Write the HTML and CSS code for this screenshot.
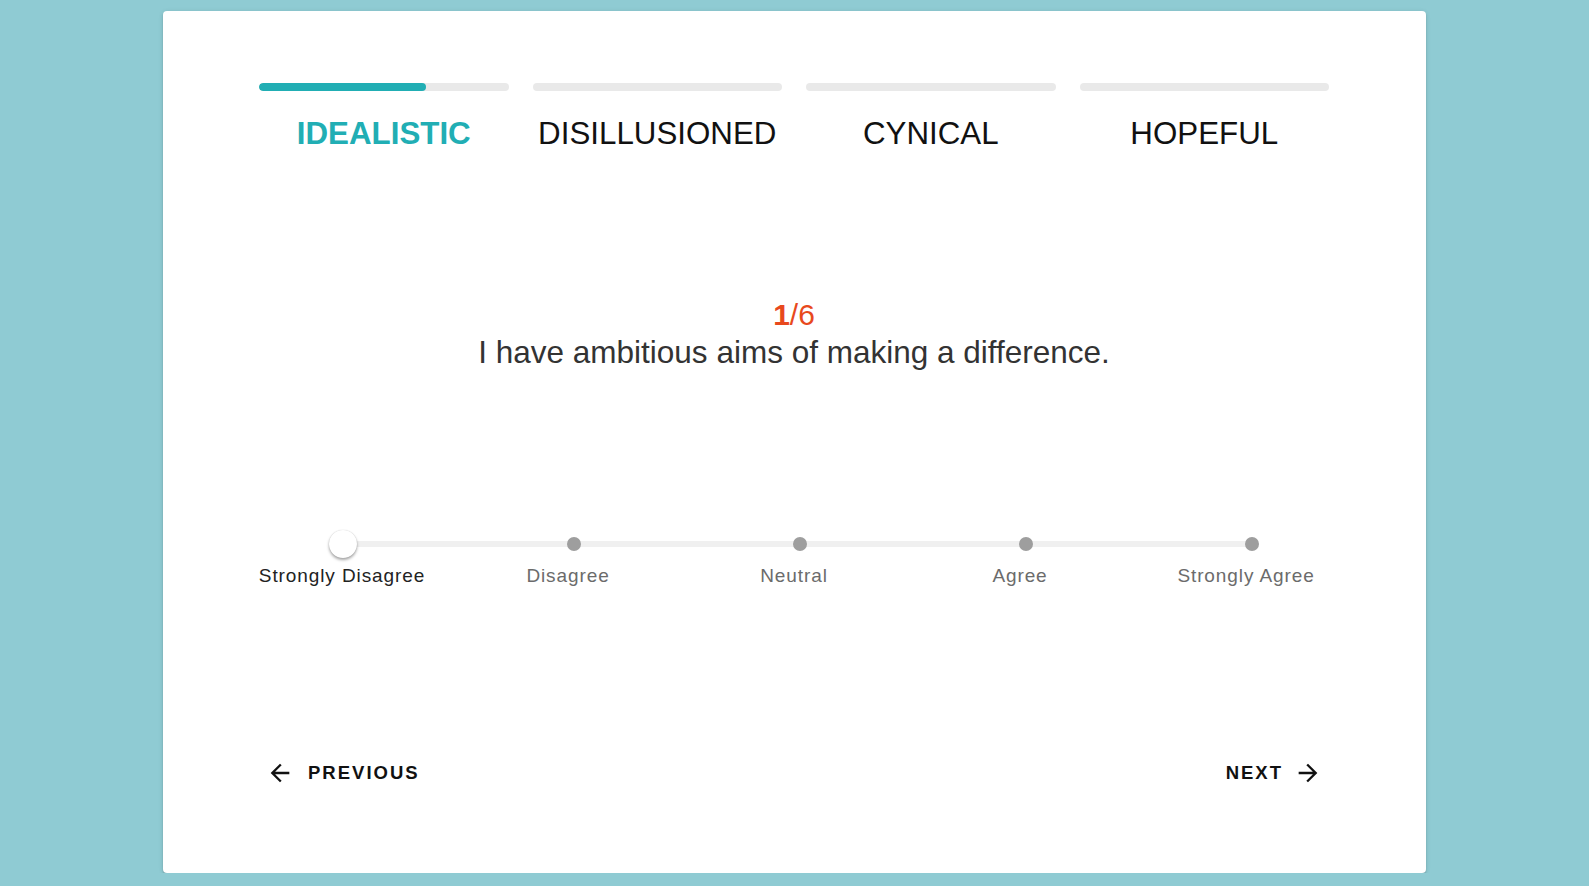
FILE: index.html
```html
<!DOCTYPE html>
<html lang="en">
<head>
<meta charset="utf-8">
<title>Quiz</title>
<link rel="stylesheet" href="styles.css">
</head>
<body>
<main class="card">
  <div class="steps">
    <div class="step">
      <div class="bar"><div class="fill" style="width:66.8%"></div></div>
      <div class="step-label active">IDEALISTIC</div>
    </div>
    <div class="step">
      <div class="bar"></div>
      <div class="step-label">DISILLUSIONED</div>
    </div>
    <div class="step">
      <div class="bar"></div>
      <div class="step-label">CYNICAL</div>
    </div>
    <div class="step">
      <div class="bar"></div>
      <div class="step-label">HOPEFUL</div>
    </div>
  </div>

  <div class="question">
    <div class="count"><b>1</b>/6</div>
    <div class="text">I have ambitious aims of making a difference.</div>
  </div>

  <div class="scale">
    <div class="track"></div>
    <div class="point">
      <div class="mark-row"><span class="thumb"></span></div>
      <div class="mark-label selected">Strongly Disagree</div>
    </div>
    <div class="point">
      <div class="mark-row"><span class="dot"></span></div>
      <div class="mark-label">Disagree</div>
    </div>
    <div class="point">
      <div class="mark-row"><span class="dot"></span></div>
      <div class="mark-label">Neutral</div>
    </div>
    <div class="point">
      <div class="mark-row"><span class="dot"></span></div>
      <div class="mark-label">Agree</div>
    </div>
    <div class="point">
      <div class="mark-row"><span class="dot"></span></div>
      <div class="mark-label">Strongly Agree</div>
    </div>
  </div>

  <div class="nav">
    <button class="btn btn-prev" type="button">
      <svg class="icon" viewBox="0 0 24 24" width="28" height="28" aria-hidden="true"><path d="M20 11H7.83l5.59-5.59L12 4l-8 8 8 8 1.41-1.41L7.83 13H20v-2z"/></svg>
      <span>PREVIOUS</span>
    </button>
    <button class="btn btn-next" type="button">
      <span>NEXT</span>
      <svg class="icon" viewBox="0 0 24 24" width="28" height="28" aria-hidden="true"><path d="M12 4l-1.41 1.41L16.17 11H4v2h12.17l-5.58 5.59L12 20l8-8z"/></svg>
    </button>
  </div>
</main>
</body>
</html>
```
FILE: styles.css
```css
* { box-sizing: border-box; }

html, body {
  margin: 0;
  padding: 0;
  background: #8fcbd3;
  font-family: "Liberation Sans", Arial, sans-serif;
}

body {
  padding-top: 11px;
}

.card {
  width: 1263px;
  height: 862px;
  margin: 0 auto;
  background: #ffffff;
  border-radius: 4px;
  box-shadow: 0 3px 1px -2px rgba(0,0,0,0.2), 0 2px 2px 0 rgba(0,0,0,0.14), 0 1px 5px 0 rgba(0,0,0,0.12);
  padding: 72px 97px 0 96px;
  display: flex;
  flex-direction: column;
}

/* steps */
.steps {
  display: grid;
  grid-template-columns: repeat(4, 1fr);
  column-gap: 24px;
}

.bar {
  height: 8px;
  border-radius: 4px;
  background: #e9e9e9;
  overflow: hidden;
}

.fill {
  height: 100%;
  border-radius: 4px;
  background: #21aeb4;
}

.step-label {
  margin-top: 25px;
  text-align: center;
  font-size: 31.3px;
  line-height: 36px;
  color: #111111;
}

.step-label.active {
  color: #21aeb4;
  font-weight: 700;
}

/* question */
.question {
  margin-top: 146px;
  text-align: center;
}

.count {
  font-size: 30px;
  line-height: 34px;
  color: #e8491d;
}

.count b { font-weight: 700; }

.text {
  margin-top: 2px;
  font-size: 31.5px;
  line-height: 36px;
  color: #333333;
}

/* slider scale */
.scale {
  position: relative;
  margin: 160px -30px 0;
  display: grid;
  grid-template-columns: repeat(5, 1fr);
}

.track {
  position: absolute;
  left: 113px;
  right: 107px;
  top: 11px;
  height: 6px;
  background: #f0f0f0;
  border-radius: 3px;
}

.point {
  display: flex;
  flex-direction: column;
  align-items: center;
  position: relative;
}

.mark-row {
  height: 28px;
  display: flex;
  align-items: center;
  justify-content: center;
}

.dot {
  width: 14px;
  height: 14px;
  border-radius: 50%;
  background: #9e9e9e;
  margin-left: 12px;
}

.thumb {
  width: 28px;
  height: 28px;
  border-radius: 50%;
  background: #ffffff;
  margin-left: 2px;
  box-shadow: 0 2px 3px rgba(0,0,0,0.35), 0 0 1px rgba(0,0,0,0.2);
}

.mark-label {
  margin-top: 7px;
  font-size: 19px;
  line-height: 22px;
  letter-spacing: 0.9px;
  color: #6b6b6b;
  white-space: nowrap;
}

.mark-label.selected {
  color: #222222;
}

/* nav */
.nav {
  margin-top: 172px;
  display: flex;
  justify-content: space-between;
  align-items: center;
}

.btn {
  display: flex;
  align-items: center;
  background: none;
  border: 0;
  padding: 0;
  font-family: "Liberation Sans", Arial, sans-serif;
  font-size: 18.5px;
  font-weight: 700;
  letter-spacing: 2px;
  color: #111111;
  cursor: pointer;
}

.btn-prev {
  padding-left: 7px;
  gap: 14px;
}

.btn-next {
  padding-right: 7px;
  gap: 11px;
}

.icon {
  display: block;
  fill: #111111;
}
```
